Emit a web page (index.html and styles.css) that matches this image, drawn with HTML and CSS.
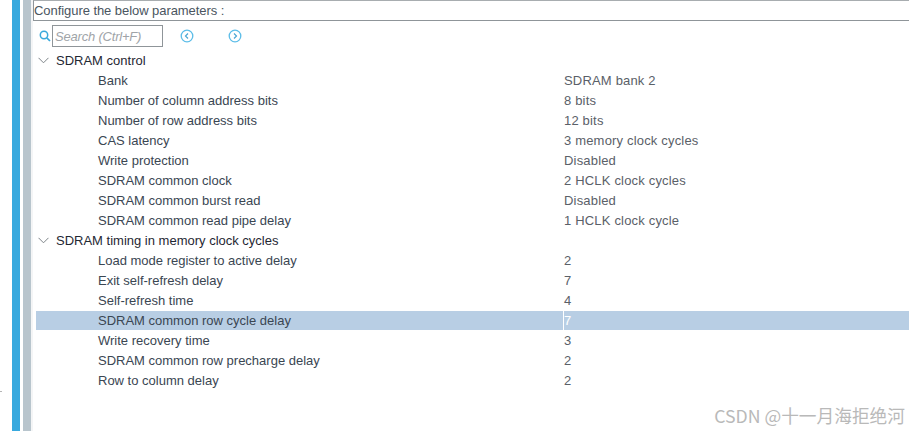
FILE: index.html
```html
<!DOCTYPE html>
<html lang="en">
<head>
<meta charset="utf-8">
<title>SDRAM parameters</title>
<link rel="stylesheet" href="styles.css">
</head>
<body>
<div class="tick"></div>
<div class="page">
  <div class="bar-blue"></div>
  <div class="bar-grey"></div>
  <main class="panel">
    <div class="heading">Configure the below parameters :</div>
    <div class="toolbar">
      <svg class="search-icon" width="12" height="12" viewBox="0 0 12 12"><circle cx="5" cy="5" r="3.7" fill="none" stroke="#3aa9dc" stroke-width="1.5"/><path d="M7.8 7.8 11 11" stroke="#3aa9dc" stroke-width="1.7" fill="none"/></svg>
      <div class="search">Search (Ctrl+F)</div>
      <svg class="nav nav-prev" width="14" height="14" viewBox="0 0 14 14"><circle cx="7" cy="7" r="5.8" fill="none" stroke="#5cbde8" stroke-width="1.3"/><path d="M8 4.5 5.5 7 8 9.500" fill="none" stroke="#4aa6d4" stroke-width="1.2"/></svg>
      <svg class="nav nav-next" width="14" height="14" viewBox="0 0 14 14"><circle cx="7" cy="7" r="5.8" fill="none" stroke="#5cbde8" stroke-width="1.3"/><path d="M6 4.500 8.500 7 6 9.500" fill="none" stroke="#4aa6d4" stroke-width="1.2"/></svg>
    </div>
    <div class="tree">
      <div class="group"><svg class="chev" width="11" height="7" viewBox="0 0 11 7"><path d="M.5 .8 5.500 5.800 10.500 .8" fill="none" stroke="#7d8388" stroke-width="1"/></svg><span class="label">SDRAM control</span></div>
      <div class="row"><span class="key">Bank</span><span class="val">SDRAM bank 2</span></div>
      <div class="row"><span class="key">Number of column address bits</span><span class="val">8 bits</span></div>
      <div class="row"><span class="key">Number of row address bits</span><span class="val">12 bits</span></div>
      <div class="row"><span class="key">CAS latency</span><span class="val">3 memory clock cycles</span></div>
      <div class="row"><span class="key">Write protection</span><span class="val">Disabled</span></div>
      <div class="row"><span class="key">SDRAM common clock</span><span class="val">2 HCLK clock cycles</span></div>
      <div class="row"><span class="key">SDRAM common burst read</span><span class="val">Disabled</span></div>
      <div class="row"><span class="key">SDRAM common read pipe delay</span><span class="val">1 HCLK clock cycle</span></div>
      <div class="group"><svg class="chev" width="11" height="7" viewBox="0 0 11 7"><path d="M.5 .8 5.500 5.800 10.500 .8" fill="none" stroke="#7d8388" stroke-width="1"/></svg><span class="label">SDRAM timing in memory clock cycles</span></div>
      <div class="row"><span class="key">Load mode register to active delay</span><span class="val">2</span></div>
      <div class="row"><span class="key">Exit self-refresh delay</span><span class="val">7</span></div>
      <div class="row"><span class="key">Self-refresh time</span><span class="val">4</span></div>
      <div class="row selected"><span class="key">SDRAM common row cycle delay</span><span class="val">7</span></div>
      <div class="row"><span class="key">Write recovery time</span><span class="val">3</span></div>
      <div class="row"><span class="key">SDRAM common row precharge delay</span><span class="val">2</span></div>
      <div class="row"><span class="key">Row to column delay</span><span class="val">2</span></div>
    </div>
  </main>
</div>
<div class="watermark">CSDN @十一月海拒绝河</div>
</body>
</html>
```
FILE: styles.css
```css
* { box-sizing: border-box; }
html, body { margin: 0; height: 100%; overflow: hidden; background: #fff; }
body { font: 13px/20px "Liberation Sans", Arial, sans-serif; color: #2f3b48; position: relative; }
.tick { position: absolute; left: 0; top: 391px; width: 2px; height: 1px; background: #b5b5b5; }
.page { display: flex; height: 431px; padding-left: 12px; }
.bar-blue { width: 8px; background: #38a9de; margin-right: 3px; }
.bar-grey { width: 8px; background: #b8c5cd; }
.panel { flex: 1; min-width: 0; padding-left: 2px; background: linear-gradient(to right, #f4f5f6 2px, #fff 2px); }
.heading { height: 21px; border: 1px solid #8f9599; border-top-color: #a8adb0; border-right: 0; line-height: 19px; color: #4a5560; letter-spacing: -.06px; background: #fff; }
.toolbar { display: flex; align-items: center; height: 30px; padding: 0 0 0 6px; }
.search-icon { margin-right: 1px; }
.search { width: 111px; height: 22px; border: 1px solid #8f9599; padding-left: 2px; font-style: italic; line-height: 21px; color: #a0a4a8; white-space: nowrap; letter-spacing: -.2px; }
.nav-prev { margin-left: 17px; }
.nav-next { margin-left: 34px; }
.tree { display: flex; flex-direction: column; padding-left: 3px; margin-top: -1px; }
.group { display: flex; align-items: center; height: 20px; padding-left: 2px; color: #1f2833; }
.label { margin-top: 2px; }
.chev { margin-right: 7px; }
.row { display: flex; height: 20px; padding-left: 62px; color: #3a4652; line-height: 22px; }
.key { width: 466px; flex: none; }
.val { color: #5a6068; letter-spacing: .18px; }
.selected { background: #b8cee4; padding-left: 0; margin-top: 1px; height: 19px; line-height: 20px; }
.selected .key { padding-left: 62px; width: 527px; }
.selected .val { color: #fff; flex: 1; border-left: 1px solid #fff; }
.watermark { position: absolute; right: 4px; bottom: 5px; font: 17.7px/22px "Noto Sans CJK SC", "Liberation Sans", sans-serif; color: #b9b9b9; white-space: nowrap; }
```
